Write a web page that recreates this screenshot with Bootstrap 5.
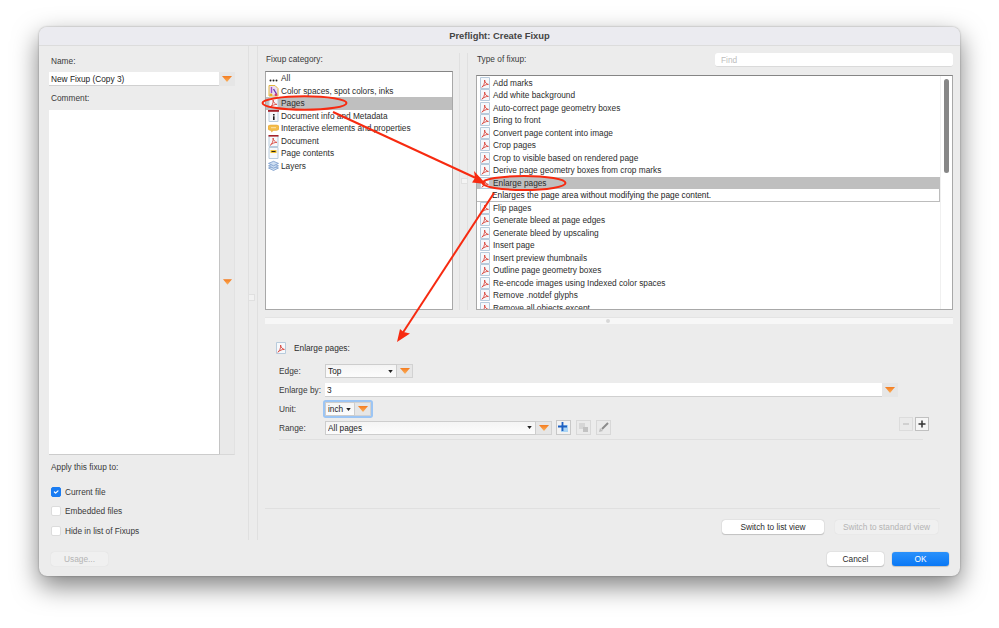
<!DOCTYPE html>
<html lang="en">
<head>
    <meta charset="UTF-8">
    <meta name="viewport" content="width=device-width, initial-scale=1.0">
    <title>Preflight: Create Fixup</title>
    <link href="https://cdn.jsdelivr.net/npm/bootstrap@5.3.0/dist/css/bootstrap.min.css" rel="stylesheet">
    <style>
        html, body { height: 100%; }
        body {
            background: #fff;
            margin: 0;
            padding-top: 27px;
            font-family: "Liberation Sans", Arial, sans-serif;
            font-size: 8.3px;
            line-height: 12px;
            color: #2c2c2c;
        }
        .fx-win {
            width: 921px;
            height: 549px;
            margin-left: 39px;
            background: #ececec;
            border-radius: 8px;
            box-shadow: 0 10px 26px rgba(0, 0, 0, .5), 0 0 2px rgba(0, 0, 0, .35);
            position: relative;
        }
        .fx-title {
            height: 19px;
            background: #ebebf0;
            border-bottom: 1px solid #dcdcdc;
            border-radius: 8px 8px 0 0;
            font-weight: 700;
            font-size: 9.4px;
            line-height: 18px;
            color: #444;
            text-align: center;
        }
        .fx-main { height: 530px; }
        .fx-left {
            width: 210px;
            flex: none;
            padding: 9px 13px 0 10px;
            border-right: 1px solid #e0e0e0;
            height: 494px;
        }
        .fx-lbl { height: 12px; color: #3a3a3a; white-space: nowrap; }
        .fx-left > .fx-lbl { margin-left: 2px; }
        .fx-right { width: 702px; margin-left: 8px; border-left: 1px solid #e0e0e0; height: 494px; }

        .fx-field {
            height: 14px;
            padding: 0 2px;
            font-size: 8.3px;
            line-height: 13px;
            border: 0;
            border-bottom: 1px solid #d0d0d0;
            border-radius: 0;
            min-height: 0;
            color: #222;
            background: #fff;
        }
        .fx-tri {
            flex: none;
            width: 16px;
            height: 14px;
            background: #e6e6e6;
            border: 1px solid #d2d2d2;
            display: flex;
            align-items: center;
            justify-content: center;
        }
        .fx-tri svg { width: 10px; height: 6px; }
        .fx-comment {
            height: 345px;
            width: 170px;
            border: 0;
            border-bottom: 1px solid #ccc;
            border-radius: 0;
            background: #fff;
            resize: none;
        }
        .fx-strip {
            width: 16px;
            height: 345px;
            background: #e9e9e9;
            border-left: 1px solid #c4c4c4;
            border-right: 1px solid #e2e2e2;
            border-bottom: 1px solid #d8d8d8;
            display: flex;
            align-items: center;
            justify-content: center;
        }
        .fx-strip svg { width: 9px; height: 6px; }

        .fx-check { min-height: 0; padding: 0; margin: 0; height: 12px; align-items: center; }
        .fx-check .form-check-input {
            float: none;
            width: 10px;
            height: 10px;
            margin: 0 4px 0 2px;
            border: 1px solid #dcdcdc;
            border-radius: 2px;
            flex: none;
        }
        .fx-check .form-check-input:checked {
            background-color: #1a7cf2;
            border-color: #1a7cf2;
        }
        .fx-check .form-check-label { color: #3a3a3a; }

        .fx-list {
            background: #fff;
            border: 1px solid #a8a8a8;
            border-top-color: #858585;
            border-radius: 0;
            overflow: hidden;
        }
        .fx-list .list-group-item {
            border: 0;
            padding: 0;
            height: 12.5px;
            line-height: 12.5px;
            font-size: 8.3px;
            color: #2c2c2c;
            background: transparent;
            white-space: nowrap;
            display: flex;
            align-items: center;
            border-radius: 0;
            flex: none;
        }
        .fx-list .list-group-item svg { flex: none; }
        .fx-list .fx-sel { background: #bfbfbf; }
        .fx-list .fx-note {
            border-bottom: 1px solid #bcbcbc;
            border-right: 1px solid #bcbcbc;
            padding-left: 15px;
            color: #222;
        }
        .fx-cat { width: 188px; height: 239px; }
        .fx-cat .list-group-item svg { width: 11px; height: 12px; margin: 0 2px 0 2px; }
        .fx-type { height: 235px; width: 477px; }
        .fx-rows { width: 465px; padding-top: .5px; }
        .fx-rows .list-group-item svg { width: 10px; height: 12px; margin: 0 3px 0 3px; }
        .fx-track { width: 12px; border-left: 1px solid #f0f0f0; flex: none; padding: 3px 3px 0; }
        .fx-thumb { height: 94px; background: #878787; border-radius: 3px; }

        .fx-find {
            width: 238px;
            height: 14px;
            padding: 0 6px;
            min-height: 0;
            font-size: 8.3px;
            border: 0;
            border-bottom: 1px solid #dadada;
            border-radius: 3px;
            background: #fff;
        }
        .fx-find::placeholder { color: #bdbdbd; }

        .fx-vline { width: 9px; border-left: 1px solid #e0e0e0; border-right: 1px solid #e0e0e0; margin: 0 8px 0 6px; position: relative; flex: none; }
        .fx-grip { width: 7px; height: 6px; background: #f4f4f4; border: 1px solid #e0e0e0; position: absolute; top: 125px; left: 1px; }
        .fx-lgrip { width: 7px; height: 7px; background: #f2f2f2; border: 1px solid #e0e0e0; position: absolute; left: 209px; top: 248px; }

        .fx-split {
            height: 7px;
            width: 688px;
            background: #f7f7f7;
            border-top: 1px solid #e4e4e4;
            margin: 7px 0 0 7px;
            position: relative;
        }
        .fx-split span { position: absolute; left: 341px; top: 1px; width: 4px; height: 4px; background: #d8d8d8; border-radius: 50%; }

        .fx-head { margin: 18px 0 0 18px; height: 12px; }
        .fx-head svg { width: 10px; height: 12px; margin-right: 8px; }
        .fx-row { margin-left: 21px; }
        .fx-row .fx-lbl { width: 46px; flex: none; }
        .fx-combo {
            height: 14px;
            min-height: 0;
            padding: 0 2px;
            font-size: 8.3px;
            line-height: 12px;
            color: #222;
            border: 1px solid #cdcdcd;
            border-radius: 0;
            background: url("data:image/svg+xml,%3Csvg xmlns='http://www.w3.org/2000/svg' viewBox='0 0 6 4'%3E%3Cpath d='M0 0h6L3 4z' fill='%23222'/%3E%3C/svg%3E") no-repeat right 3px center / 5px 3px, linear-gradient(#f4f4f4, #fcfcfc);
        }
        .fx-ring { border-radius: 1px; box-shadow: 0 0 0 2px #9cc5f4; display: flex; }
        .fx-sq {
            width: 15px;
            height: 15px;
            background: #eaeaea;
            border: 1px solid #d8d8d8;
            display: flex;
            align-items: center;
            justify-content: center;
            flex: none;
        }
        .fx-sq svg { width: 11px; height: 11px; }
        .fx-pm { width: 14px; height: 14px; }
        .fx-pm svg { width: 8px; height: 8px; }
        .fx-rule { height: 1px; background: #e0e0e0; }

        .fx-btn {
            height: 14px;
            padding: 0;
            font-size: 8.3px;
            line-height: 14px;
            border: 0;
            border-radius: 3px;
            background: #fff;
            color: #2c2c2c;
            box-shadow: 0 0 1px rgba(0, 0, 0, .35), 0 1px 1px rgba(0, 0, 0, .15);
        }
        .fx-btn:disabled {
            background: #f0f0f0;
            color: #b4b4b4;
            opacity: 1;
            box-shadow: 0 0 1px rgba(0, 0, 0, .12);
        }
        .fx-ok { background: linear-gradient(#2a91fb, #0a78f5); color: #fff; }
        .fx-marks { position: absolute; left: 0; top: 0; pointer-events: none; }
    </style>
</head>
<body>
    <svg width="0" height="0" class="position-absolute">
        <symbol id="pdf" viewBox="0 0 10 12">
            <path d="M.5.5h9v11h-9z" fill="#f6f8fb" stroke="#b8cbdc"/>
            <path d="M1.8 10.200C3.600 9 4.900 6 4.600 3c.4 2.400 1.700 4.100 3.800 4.400-2.300-.1-4.600 1-6.600 2.800z" fill="none" stroke="#d9483f" stroke-width=".9"/>
        </symbol>
        <symbol id="pdfred" viewBox="0 0 10 12">
            <path d="M.5.5h9v11h-9z" fill="#f6f8fb" stroke="#b8cbdc"/>
            <path d="M0 0h10v1.600H0z" fill="#a5232b"/>
            <path d="M1.8 10.200C3.600 9 4.900 6 4.600 3c.4 2.400 1.700 4.100 3.800 4.400-2.300-.1-4.600 1-6.600 2.800z" fill="none" stroke="#d9483f" stroke-width=".9"/>
        </symbol>
        <symbol id="tri" viewBox="0 0 10 6">
            <defs><linearGradient id="trig" x1="0" y1="0" x2="0" y2="1"><stop offset="0" stop-color="#f47c20"/><stop offset="1" stop-color="#fbb15d"/></linearGradient></defs>
            <path d="M0 0h10L5 6z" fill="url(#trig)"/>
        </symbol>
    </svg>

    <div class="fx-win d-flex flex-column">
        <div class="fx-title">Preflight: Create Fixup</div>
        <div class="fx-main d-flex">
            <!-- left column -->
            <div class="fx-left position-relative">
                <div class="fx-lbl">Name:</div>
                <div class="d-flex" style="margin-top:5px">
                    <input class="form-control fx-field" value="New Fixup (Copy 3)">
                    <div class="fx-tri border-0"><svg><use href="#tri"/></svg></div>
                </div>
                <div class="fx-lbl" style="margin-top:6px">Comment:</div>
                <div class="d-flex" style="margin-top:6px">
                    <textarea class="form-control fx-comment"></textarea>
                    <div class="fx-strip"><svg><use href="#tri"/></svg></div>
                </div>
                <div class="fx-lbl" style="margin-top:6px">Apply this fixup to:</div>
                <div class="form-check d-flex fx-check" style="margin-top:13px">
                    <input class="form-check-input" type="checkbox" id="c1" checked>
                    <label class="form-check-label" for="c1">Current file</label>
                </div>
                <div class="form-check d-flex fx-check" style="margin-top:7px">
                    <input class="form-check-input" type="checkbox" id="c2">
                    <label class="form-check-label" for="c2">Embedded files</label>
                </div>
                <div class="form-check d-flex fx-check" style="margin-top:8px">
                    <input class="form-check-input" type="checkbox" id="c3">
                    <label class="form-check-label" for="c3">Hide in list of Fixups</label>
                </div>
                <button class="btn fx-btn d-block position-absolute" style="left:12px;top:506px;width:57px" disabled>Usage...</button>
                <div class="fx-lgrip"></div>
            </div>

            <!-- right side -->
            <div class="fx-right">
                <div class="d-flex" style="padding-top:7px;height:264px">
                    <div style="margin-left:7px;width:188px;flex:none">
                        <div class="fx-lbl" style="margin-left:1px">Fixup category:</div>
                        <div class="list-group fx-list fx-cat" style="margin-top:6px">
                            <div class="list-group-item"><svg viewBox="0 0 11 12"><circle cx="2.500" cy="8.500" r="1" fill="#222"/><circle cx="5.500" cy="8.500" r="1" fill="#222"/><circle cx="8.500" cy="8.500" r="1" fill="#222"/></svg>All</div>
                            <div class="list-group-item"><svg viewBox="0 0 11 12"><path d="M1 .5h6l3 3V11H1z" fill="#eadcf3" stroke="#e2b840"/><path d="M3.500 2v6" stroke="#a24fc0" stroke-width="1.400"/><path d="M5.500 4l3 5" stroke="#6a3fb0" stroke-width="1.400"/><circle cx="3" cy="9.800" r="1.400" fill="#e9b520"/><circle cx="8" cy="9.800" r="1.400" fill="#d23c6e"/></svg>Color spaces, spot colors, inks</div>
                            <div class="list-group-item fx-sel"><svg><use href="#pdf"/></svg>Pages</div>
                            <div class="list-group-item"><svg viewBox="0 0 11 12"><path d="M1 .5h9v11H1z" fill="#f6f8fb" stroke="#b8cbdc"/><path d="M0 0h11v1.800H0z" fill="#a5232b"/><path d="M5 4h1.600v1.400H5zM5 6.200h1.600V10H5z" fill="#222"/></svg>Document info and Metadata</div>
                            <div class="list-group-item"><svg viewBox="0 0 11 12"><path d="M2.500 3h6a2.500 2.500 0 0 1 0 5.400H5.500L3.500 10V8.400h-1a2.700 2.700 0 0 1 0-5.400z" fill="#f3bc4a" stroke="#e0a030" stroke-width=".5"/><path d="M3 5.700h5" stroke="#fbe3a8"/></svg>Interactive elements and properties</div>
                            <div class="list-group-item"><svg><use href="#pdfred"/></svg>Document</div>
                            <div class="list-group-item"><svg viewBox="0 0 11 12"><path d="M1 .5h9v11H1z" fill="#f6f8fb" stroke="#b8cbdc"/><path d="M2.500 3h6v3h-6z" fill="#f2c230"/><path d="M3.500 4h4v1h-4z" fill="#222"/></svg>Page contents</div>
                            <div class="list-group-item"><svg viewBox="0 0 11 12"><g fill="#cfdff2" stroke="#6a8fc4" stroke-width=".7"><path d="M5.500 6L10.500 8 5.500 10.500.5 8z"/><path d="M5.500 3.700L10.500 5.800 5.500 8.200.5 5.800z"/><path d="M5.500 1.300L10.500 3.400 5.500 5.800.5 3.400z"/></g></svg>Layers</div>
                        </div>
                    </div>
                    <div class="fx-vline"><div class="fx-grip"></div></div>
                    <div style="width:477px;flex:none">
                        <div class="d-flex justify-content-between" style="height:15px;margin-bottom:7px">
                            <div class="fx-lbl" style="margin-left:1px">Type of fixup:</div>
                            <input class="form-control fx-find" placeholder="Find">
                        </div>
                        <div class="d-flex fx-list fx-type">
                            <div class="list-group fx-rows" style="border-radius:0">
                                <div class="list-group-item"><svg><use href="#pdf"/></svg>Add marks</div>
                                <div class="list-group-item"><svg><use href="#pdf"/></svg>Add white background</div>
                                <div class="list-group-item"><svg><use href="#pdf"/></svg>Auto-correct page geometry boxes</div>
                                <div class="list-group-item"><svg><use href="#pdf"/></svg>Bring to front</div>
                                <div class="list-group-item"><svg><use href="#pdf"/></svg>Convert page content into image</div>
                                <div class="list-group-item"><svg><use href="#pdf"/></svg>Crop pages</div>
                                <div class="list-group-item"><svg><use href="#pdf"/></svg>Crop to visible based on rendered page</div>
                                <div class="list-group-item"><svg><use href="#pdf"/></svg>Derive page geometry boxes from crop marks</div>
                                <div class="list-group-item fx-sel"><svg><use href="#pdf"/></svg>Enlarge pages</div>
                                <div class="list-group-item fx-note">Enlarges the page area without modifying the page content.</div>
                                <div class="list-group-item"><svg><use href="#pdf"/></svg>Flip pages</div>
                                <div class="list-group-item"><svg><use href="#pdf"/></svg>Generate bleed at page edges</div>
                                <div class="list-group-item"><svg><use href="#pdf"/></svg>Generate bleed by upscaling</div>
                                <div class="list-group-item"><svg><use href="#pdf"/></svg>Insert page</div>
                                <div class="list-group-item"><svg><use href="#pdf"/></svg>Insert preview thumbnails</div>
                                <div class="list-group-item"><svg><use href="#pdf"/></svg>Outline page geometry boxes</div>
                                <div class="list-group-item"><svg><use href="#pdf"/></svg>Re-encode images using Indexed color spaces</div>
                                <div class="list-group-item"><svg><use href="#pdf"/></svg>Remove .notdef glyphs</div>
                                <div class="list-group-item"><svg><use href="#pdf"/></svg>Remove all objects except</div>
                            </div>
                            <div class="fx-track"><div class="fx-thumb"></div></div>
                        </div>
                    </div>
                </div>

                <div class="fx-split"><span></span></div>

                <div class="fx-head d-flex align-items-center"><svg><use href="#pdf"/></svg>Enlarge pages:</div>

                <div class="fx-row d-flex align-items-center" style="margin-top:10px">
                    <div class="fx-lbl">Edge:</div>
                    <select class="form-select fx-combo" style="width:72px"><option>Top</option></select>
                    <div class="fx-tri border-start-0"><svg><use href="#tri"/></svg></div>
                </div>
                <div class="fx-row d-flex align-items-center" style="margin-top:5px">
                    <div class="fx-lbl">Enlarge by:</div>
                    <input class="form-control fx-field" style="width:557px" value="3">
                    <div class="fx-tri border-0"><svg><use href="#tri"/></svg></div>
                </div>
                <div class="fx-row d-flex align-items-center" style="margin-top:5px">
                    <div class="fx-lbl">Unit:</div>
                    <div class="fx-ring">
                        <select class="form-select fx-combo" style="width:30px"><option>inch</option></select>
                        <div class="fx-tri border-start-0"><svg><use href="#tri"/></svg></div>
                    </div>
                </div>
                <div class="fx-row d-flex align-items-center" style="margin-top:4px;width:650px">
                    <div class="fx-lbl">Range:</div>
                    <select class="form-select fx-combo" style="width:211px"><option>All pages</option></select>
                    <div class="fx-tri border-start-0"><svg><use href="#tri"/></svg></div>
                    <div class="fx-sq ms-1" style="background:#f2f2f2;border-color:#c8c8c8"><svg viewBox="0 0 11 11"><path d="M3 3h7v7H3z" fill="#a9d4f5"/><path d="M4.500 0v9M0 4.500h9" stroke="#1d5fc0" stroke-width="1.800"/></svg></div>
                    <div class="fx-sq" style="margin-left:5px"><svg viewBox="0 0 11 11"><path d="M1 1h6v6H1z" fill="#d6d6d6"/><path d="M5 5h5v5H5z" fill="#c2c2c2"/></svg></div>
                    <div class="fx-sq" style="margin-left:5px"><svg viewBox="0 0 11 11"><path d="M10 1L4 7" stroke="#8c8c8c" stroke-width="2"/><path d="M1 10l1-4 3 3z" fill="#bdbdbd"/></svg></div>
                    <div class="fx-sq fx-pm ms-auto" style="margin-top:-8px;border-color:#dcdcdc"><svg viewBox="0 0 8 8"><path d="M1 4h6" stroke="#c4c4c4" stroke-width="1.400"/></svg></div>
                    <div class="fx-sq fx-pm" style="margin:-8px 0 0 2px;background:#f6f6f6;border-color:#c0c0c0"><svg viewBox="0 0 8 8"><path d="M.5 4h7M4 .5v7" stroke="#333" stroke-width="1.500"/></svg></div>
                </div>
                <div class="fx-rule" style="margin:4px 0 0 21px;width:644px"></div>
                <div class="fx-rule" style="margin:68px 0 0 7px;width:675px"></div>
                <div class="d-flex justify-content-end gap-2" style="margin-top:11px;width:680px">
                    <button class="btn fx-btn" style="width:102px;margin-right:3px">Switch to list view</button>
                    <button class="btn fx-btn" style="width:103px" disabled>Switch to standard view</button>
                </div>
            </div>
        </div>
        <div class="position-absolute d-flex gap-2" style="right:11px;bottom:10px">
            <button class="btn fx-btn" style="width:57px">Cancel</button>
            <button class="btn fx-btn fx-ok" style="width:57px">OK</button>
        </div>
        <!-- red annotations drawn on top of the dialog -->
        <svg class="fx-marks" width="921" height="549" viewBox="39 27 921 549" fill="none" stroke="#f72a10">
            <ellipse cx="304.500" cy="103" rx="42" ry="6.800" stroke-width="2"/>
            <ellipse cx="524" cy="183" rx="41.500" ry="7" stroke-width="2"/>
            <path d="M333 112L478 179" stroke-width="2"/>
            <path d="M486 184l-14-1.500 3-4.500-1-7z" fill="#f72a10" stroke="none"/>
            <path d="M494 193L402 334" stroke-width="2"/>
            <path d="M397 342l3-13 3.500 3 6.500 1.500z" fill="#f72a10" stroke="none"/>
        </svg>
    </div>

    <script src="https://cdn.jsdelivr.net/npm/bootstrap@5.3.0/dist/js/bootstrap.bundle.min.js"></script>
</body>
</html>
